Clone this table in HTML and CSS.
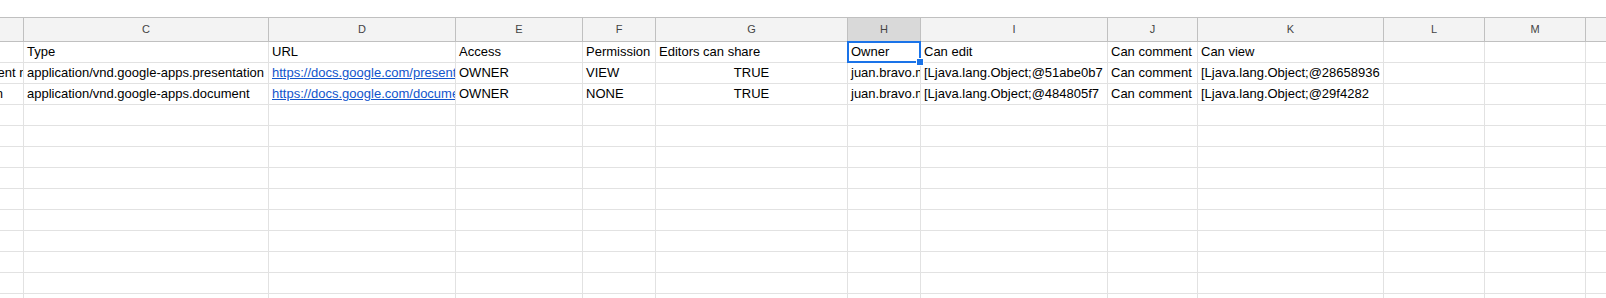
FILE: index.html
```html
<!DOCTYPE html>
<html>
<head>
<meta charset="utf-8">
<link rel="stylesheet" href="styles.css">
</head>
<body>
<div class="sheet">
  <div class="row head">
    <div class="c colB"></div>
    <div class="c">C</div>
    <div class="c">D</div>
    <div class="c">E</div>
    <div class="c">F</div>
    <div class="c">G</div>
    <div class="c active">H</div>
    <div class="c">I</div>
    <div class="c">J</div>
    <div class="c">K</div>
    <div class="c">L</div>
    <div class="c">M</div>
    <div class="c last"></div>
  </div>
  <div class="row">
    <div class="c colB"></div>
    <div class="c">Type</div>
    <div class="c">URL</div>
    <div class="c">Access</div>
    <div class="c">Permission</div>
    <div class="c">Editors can share</div>
    <div class="c selected">Owner</div>
    <div class="c">Can edit</div>
    <div class="c">Can comment</div>
    <div class="c">Can view</div>
    <div class="c"></div>
    <div class="c"></div>
    <div class="c last"></div>
  </div>
  <div class="row">
    <div class="c colB"><span class="shift1">Test document name</span></div>
    <div class="c">application/vnd.google-apps.presentation</div>
    <div class="c"><a class="link" href="#">https://docs.google.com/presentation/d/1</a></div>
    <div class="c">OWNER</div>
    <div class="c">VIEW</div>
    <div class="c center">TRUE</div>
    <div class="c">juan.bravo.mail@example.com</div>
    <div class="c">[Ljava.lang.Object;@51abe0b7</div>
    <div class="c">Can comment</div>
    <div class="c">[Ljava.lang.Object;@28658936</div>
    <div class="c"></div>
    <div class="c"></div>
    <div class="c last"></div>
  </div>
  <div class="row">
    <div class="c colB"><span class="shift2">Presentation</span></div>
    <div class="c">application/vnd.google-apps.document</div>
    <div class="c"><a class="link" href="#">https://docs.google.com/document/d/1</a></div>
    <div class="c">OWNER</div>
    <div class="c">NONE</div>
    <div class="c center">TRUE</div>
    <div class="c">juan.bravo.mail@example.com</div>
    <div class="c">[Ljava.lang.Object;@484805f7</div>
    <div class="c">Can comment</div>
    <div class="c">[Ljava.lang.Object;@29f4282</div>
    <div class="c"></div>
    <div class="c"></div>
    <div class="c last"></div>
  </div>
  <div class="row"><div class="c colB"></div><div class="c"></div><div class="c"></div><div class="c"></div><div class="c"></div><div class="c"></div><div class="c"></div><div class="c"></div><div class="c"></div><div class="c"></div><div class="c"></div><div class="c"></div><div class="c last"></div></div>
  <div class="row"><div class="c colB"></div><div class="c"></div><div class="c"></div><div class="c"></div><div class="c"></div><div class="c"></div><div class="c"></div><div class="c"></div><div class="c"></div><div class="c"></div><div class="c"></div><div class="c"></div><div class="c last"></div></div>
  <div class="row"><div class="c colB"></div><div class="c"></div><div class="c"></div><div class="c"></div><div class="c"></div><div class="c"></div><div class="c"></div><div class="c"></div><div class="c"></div><div class="c"></div><div class="c"></div><div class="c"></div><div class="c last"></div></div>
  <div class="row"><div class="c colB"></div><div class="c"></div><div class="c"></div><div class="c"></div><div class="c"></div><div class="c"></div><div class="c"></div><div class="c"></div><div class="c"></div><div class="c"></div><div class="c"></div><div class="c"></div><div class="c last"></div></div>
  <div class="row"><div class="c colB"></div><div class="c"></div><div class="c"></div><div class="c"></div><div class="c"></div><div class="c"></div><div class="c"></div><div class="c"></div><div class="c"></div><div class="c"></div><div class="c"></div><div class="c"></div><div class="c last"></div></div>
  <div class="row"><div class="c colB"></div><div class="c"></div><div class="c"></div><div class="c"></div><div class="c"></div><div class="c"></div><div class="c"></div><div class="c"></div><div class="c"></div><div class="c"></div><div class="c"></div><div class="c"></div><div class="c last"></div></div>
  <div class="row"><div class="c colB"></div><div class="c"></div><div class="c"></div><div class="c"></div><div class="c"></div><div class="c"></div><div class="c"></div><div class="c"></div><div class="c"></div><div class="c"></div><div class="c"></div><div class="c"></div><div class="c last"></div></div>
  <div class="row"><div class="c colB"></div><div class="c"></div><div class="c"></div><div class="c"></div><div class="c"></div><div class="c"></div><div class="c"></div><div class="c"></div><div class="c"></div><div class="c"></div><div class="c"></div><div class="c"></div><div class="c last"></div></div>
  <div class="row"><div class="c colB"></div><div class="c"></div><div class="c"></div><div class="c"></div><div class="c"></div><div class="c"></div><div class="c"></div><div class="c"></div><div class="c"></div><div class="c"></div><div class="c"></div><div class="c"></div><div class="c last"></div></div>
  <div class="row"><div class="c colB"></div><div class="c"></div><div class="c"></div><div class="c"></div><div class="c"></div><div class="c"></div><div class="c"></div><div class="c"></div><div class="c"></div><div class="c"></div><div class="c"></div><div class="c"></div><div class="c last"></div></div>
</div>
</body>
</html>
```

FILE: styles.css
```css
html, body {
  margin: 0;
  padding: 0;
  background: #ffffff;
  overflow: hidden;
}

body {
  font-family: "Liberation Sans", Arial, sans-serif;
  font-size: 13px;
  color: #000000;
}

.sheet {
  padding-top: 17px;
  width: 1606px;
}

.row {
  display: grid;
  grid-template-columns: 24px 245px 187px 127px 73px 192px 73px 187px 90px 186px 101px 101px 20px;
  height: 21px;
}

.c {
  box-sizing: border-box;
  border-right: 1px solid #e2e2e2;
  border-bottom: 1px solid #e2e2e2;
  padding: 0 3px;
  line-height: 20px;
  white-space: nowrap;
  overflow: hidden;
  position: relative;
}

.c.last {
  border-right: none;
}

.c.center {
  text-align: center;
}

.colB {
  padding: 0;
}

.shift1 {
  display: inline-block;
  margin-left: -69px;
}

.shift2 {
  display: inline-block;
  margin-left: -70px;
}

.link {
  color: #1155cc;
  text-decoration: underline;
}

.head {
  height: 25px;
}

.head .c {
  background: #f3f3f3;
  border-top: 1px solid #c0c0c0;
  border-right-color: #c0c0c0;
  border-bottom-color: #c0c0c0;
  font-size: 11px;
  line-height: 23px;
  color: #444444;
  text-align: center;
  padding: 0;
}

.head .c.active {
  background: #d9d9d9;
}

.selected {
  overflow: visible;
}

.selected::after {
  content: "";
  position: absolute;
  left: -1px;
  top: -1px;
  right: -1px;
  bottom: -1px;
  border: 2px solid #1a73e8;
  pointer-events: none;
}

.selected::before {
  content: "";
  position: absolute;
  right: -4px;
  bottom: -4px;
  width: 6px;
  height: 6px;
  background: #1a73e8;
  border: 1px solid #ffffff;
  z-index: 2;
}
```
